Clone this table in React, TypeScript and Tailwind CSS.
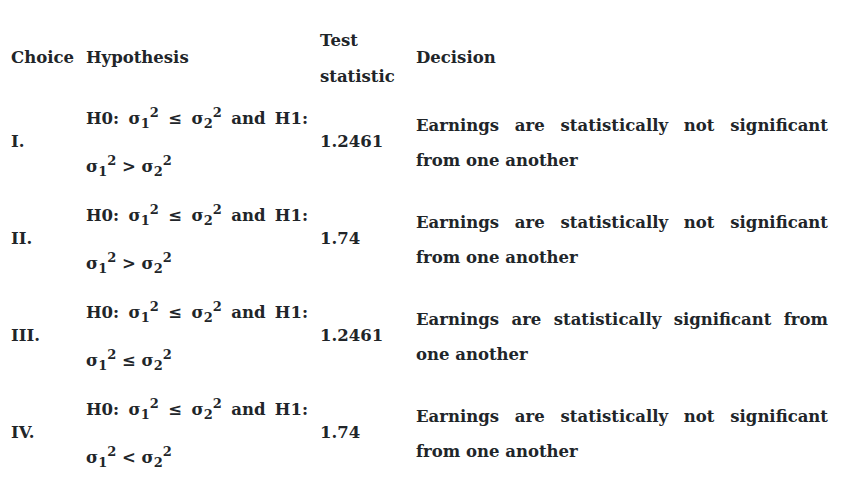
const rows = [
  { choice: "I.", rel: ">", stat: "1.2461", decision: "Earnings are statistically not significant from one another" },
  { choice: "II.", rel: ">", stat: "1.74", decision: "Earnings are statistically not significant from one another" },
  { choice: "III.", rel: "≤", stat: "1.2461", decision: "Earnings are statistically significant from one another" },
  { choice: "IV.", rel: "<", stat: "1.74", decision: "Earnings are statistically not significant from one another" },
];

function Sigma({ n }: { n: string }) {
  return (
    <>
      σ<span className="relative top-[4px] text-[13px] leading-none">{n}</span>
      <span className="relative -top-[7px] text-[13px] leading-none">2</span>
    </>
  );
}

export default function App() {
  return (
    <div className="min-h-screen bg-white px-[5px] pt-[22px] font-['DejaVu_Serif',serif] text-[16.5px] font-bold text-[#212529]">
      <table className="border-collapse">
        <thead>
          <tr className="h-[71px]">
            <th className="w-[75px] px-[6px] text-left align-middle font-bold">Choice</th>
            <th className="w-[234px] px-[6px] text-left align-middle font-bold">Hypothesis</th>
            <th className="w-[96px] px-[6px] text-left align-middle font-bold leading-[36px]">
              <span className="relative top-[1px]">Test statistic</span>
            </th>
            <th className="w-[424px] px-[6px] text-left align-middle font-bold">Decision</th>
          </tr>
        </thead>
        <tbody>
          {rows.map((r) => (
            <tr key={r.choice} className="h-[97px]">
              <td className="px-[6px] align-middle">{r.choice}</td>
              <td className="px-[6px] align-middle text-justify leading-[48px]">
                H0: <Sigma n="1" /> ≤ <Sigma n="2" /> and H1: <Sigma n="1" /> {r.rel} <Sigma n="2" />
              </td>
              <td className="px-[6px] align-middle">{r.stat}</td>
              <td className="px-[6px] align-middle text-justify leading-[35px]">{r.decision}</td>
            </tr>
          ))}
        </tbody>
      </table>
    </div>
  );
}
